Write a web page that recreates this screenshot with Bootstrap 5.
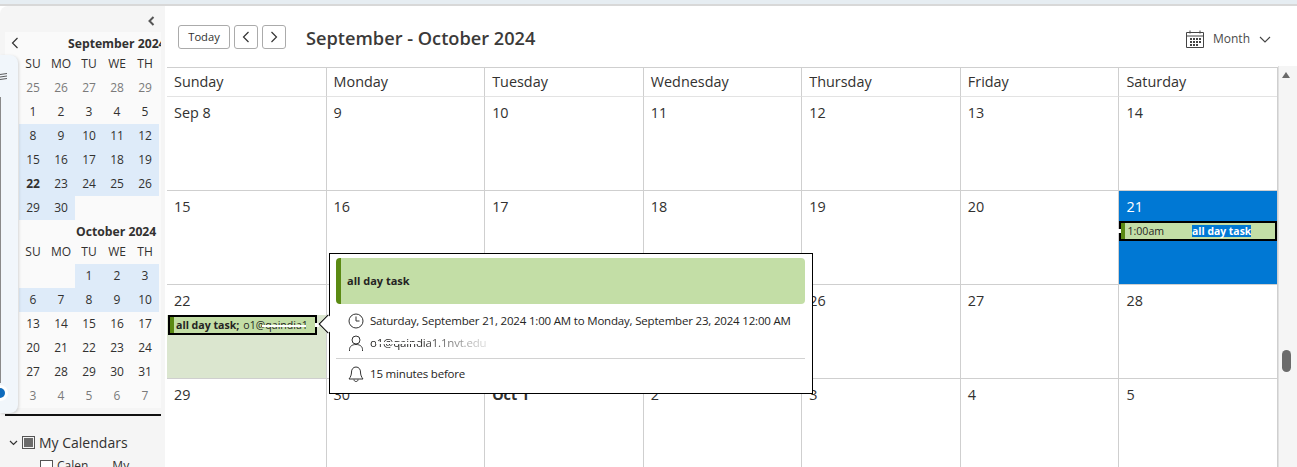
<!DOCTYPE html>
<html lang="en">
<head>
  <meta charset="UTF-8" />
  <title>Calendar</title>
  <link href="https://cdn.jsdelivr.net/npm/bootstrap@5.3.3/dist/css/bootstrap.min.css" rel="stylesheet"/>
  <style>
    html, body { height: 100%; overflow: hidden; }
    body { background: #fff; color: #323130; font-family: "Open Sans", "Noto Sans", sans-serif; font-size: 14px; }

    .top-strip { height: 6px; background: #e6edf2; border-bottom: 2px solid #d8d8d8; }
    .app-wrap { height: 461px; position: relative; }

    .side-pane { width: 165px; flex: none; background: #f5f5f5; border-top-left-radius: 8px; padding: 10px 4px 0 5px; overflow: hidden; }
    .collapse-btn { height: 16px; padding-right: 6px; }
    .mini-cal { background: #fafafa; width: 156px; height: 376px; overflow: hidden; position: relative; padding-left: 14px; }
    .mini-prev { position: absolute; left: 6px; top: 5px; }
    .mini-title { height: 22px; line-height: 24px; font-weight: 700; font-size: 12.2px; white-space: nowrap; color: #323130; }
    .mini-title-sep { padding-left: 49px; }
    .mini-title-oct { padding-left: 57px; }
    .mini-grid { display: grid; grid-template-columns: repeat(5, 28px); grid-template-rows: 22px; grid-auto-rows: 24px; width: 140px; }
    .mini-grid > div { text-align: center; line-height: 24px; font-size: 12px; color: #323130; }
    .mini-grid > .wk { font-size: 12px; height: 20px; line-height: 20px; }
    .mini-grid > .off { color: #7a7a7a; }
    .mini-grid > .sel { background: #deebf9; }
    .mini-grid > .bold { font-weight: 700; }
    .mini-rule { width: 156px; border-top: 2px solid #111; margin-top: 6px; }
    .cal-tree { padding: 16px 0 0 4px; font-size: 14px; white-space: nowrap; }
    .tree-check { width: 13px; height: 13px; border: 1px solid #555; display: inline-flex; align-items: center; justify-content: center; }
    .tree-check i { display: block; width: 9px; height: 9px; background: #6b6b6b; }
    .tree-row-2 { padding-left: 31px; font-size: 12px; margin-top: 4px; }
    .tree-row-2 .tree-check { background: #fff; }
    .tree-my { margin-left: 20px; }

    .left-flyout { position: absolute; left: 0; top: 49px; width: 18px; height: 358px; background: #f1f6fb; border-radius: 0 8px 8px 0; box-shadow: 1px 1px 3px rgba(0,0,0,.15); overflow: hidden; }
    .flyout-line { position: absolute; left: 0; top: 42px; bottom: 30px; width: 1px; background: #8a8a8a; }
    .flyout-icon { position: absolute; left: 0; top: 17px; }
    .flyout-dot { position: absolute; left: -8px; top: 330px; width: 16px; height: 16px; background: #fff; border-radius: 50%; padding: 3px; }
    .flyout-dot i { display: block; width: 10px; height: 10px; border-radius: 50%; background: #0f6cbd; }

    .main-pane { flex: 1; min-width: 0; position: relative; }
    .cal-toolbar { height: 61px; padding: 0 0 0 13px; }
    .btn-tool { height: 24px; padding: 0; border: 1px solid #ababab; border-radius: 3px; background: #fff; font-size: 11.2px; color: #323130; display: flex; align-items: center; justify-content: center; }
    .btn-today { width: 52px; padding-top: 1px; }
    .btn-arrow { width: 24px; }
    .range-title { font-size: 18.2px; font-weight: 600; color: #3b3a39; margin-left: 16px; padding-top: 4px; line-height: 1; white-space: nowrap; }
    .view-pick { position: absolute; left: 1021px; top: 24px; font-size: 12px; color: #4a4a4a; gap: 9px; }

    .cal-body { width: 1111px; margin-left: 2px; border-top: 1px solid #cfcfcf; }
    .cal-head, .cal-week { display: grid; grid-template-columns: repeat(7, 1fr); border-right: 1px solid #cfcfcf; }
    .cal-head > div { height: 29px; line-height: 28px; padding-left: 7px; font-size: 14.4px; border-left: 1px solid #cfcfcf; border-bottom: 1px solid #e3e3e3; }
    .cal-head > div:first-child, .cal-week > div:first-child { border-left: 0; }
    .cal-week { height: 94px; border-bottom: 1px solid #cfcfcf; }
    .cal-week > div { position: relative; padding: 6px 0 0 7px; border-left: 1px solid #cfcfcf; font-size: 14.4px; line-height: 20px; }
    .cal-week > .today-cell { background: #0078d4; color: #fff; }
    .cal-week > .span-cell::before { content: ""; position: absolute; left: 0; right: 0; top: 30px; bottom: 0; background: #dbe6cf; }
    .day-num { position: relative; }
    .cal-week > .strong-day { font-weight: 700; }
    .cal-week.short-row { border-bottom: 0; }

    .evt-bar { position: absolute; height: 20px; background: #c3dea6; border: 2px solid #000; display: flex; align-items: center; font-size: 10.6px; line-height: 1; white-space: nowrap; color: #252423; }
    .evt-bar::before { content: ""; width: 4px; align-self: stretch; background: #5b8a13; flex: none; }
    .evt-left { left: 1px; top: 30px; width: 149px; }
    .evt-right { left: 0; top: 30px; width: 158px; }
    .evt-title { font-weight: 700; padding-left: 2px; }
    .evt-time { padding-left: 2px; }
    .evt-selected { background: #0078d4; color: #fff; font-weight: 700; font-size: 10.4px; margin-left: 28px; padding: 1px 0; }
    .evt-handle { position: absolute; width: 4px; height: 4px; background: #fff; }
    .smudge { position: absolute; height: 2px; background: #fff; }

    .scroll-rail { position: absolute; right: 0; top: 60px; bottom: 0; width: 19px; background: #f5f5f5; border-left: 1px solid #e0e0e0; }
    .scroll-up { position: absolute; left: 3px; top: 6px; width: 0; height: 0; border-left: 4.5px solid transparent; border-right: 4.5px solid transparent; border-bottom: 6px solid #6a6a6a; }
    .scroll-thumb { position: absolute; left: 3px; top: 284px; width: 9px; height: 22px; border-radius: 5px; background: #6b6b6b; }

    .event-pop { position: absolute; left: 329px; top: 247px; width: 484px; height: 141px; background: #fff; border: 1px solid #000; padding: 4px 7px 0 6px; font-size: 11.5px; letter-spacing: -.185px; color: #252423; z-index: 5; }
    .pop-arrow { position: absolute; left: -9px; top: 63px; width: 14px; height: 14px; background: #fff; border-left: 1px solid #000; border-bottom: 1px solid #000; transform: rotate(45deg) scale(.95); }
    .pop-head { height: 46px; background: #c3dea6; border-left: 5px solid #5b8a13; border-radius: 4px; display: flex; align-items: center; padding-left: 6px; font-weight: 700; font-size: 11px; letter-spacing: 0; }
    .pop-row { display: flex; align-items: center; gap: 6px; height: 22px; white-space: nowrap; position: relative; padding-left: 6px; }
    .pop-row svg { flex: none; margin-left: 6px; margin-right: 0; }
    .pop-row-date { margin-top: 6px; }
    .pop-row-remind { margin-top: 4px; }
    .pop-rule { border-top: 1px solid #d2d2d2; margin-top: 4px; }
    .pop-mail { -webkit-mask-image: linear-gradient(90deg, #000 40%, rgba(0,0,0,.15) 100%); mask-image: linear-gradient(90deg, #000 40%, rgba(0,0,0,.15) 100%); }
  </style>
</head>
<body>
  <div class="top-strip"></div>
  <div class="app-wrap d-flex">
    <div class="side-pane">
      <div class="collapse-btn d-flex justify-content-end align-items-start">
        <svg width="7" height="10" viewBox="0 0 7 10"><path d="M5.500 1 1.500 5l4 4" fill="none" stroke="#555" stroke-width="2"/></svg>
      </div>
      <div class="mini-cal">
        <svg class="mini-prev" width="8" height="12" viewBox="0 0 8 12"><path d="M6.500 1 1.500 6l5 5" fill="none" stroke="#333" stroke-width="1.200"/></svg>
        <div class="mini-title mini-title-sep">September 2024</div>
        <div class="mini-grid">
          <div class="wk">SU</div><div class="wk">MO</div><div class="wk">TU</div><div class="wk">WE</div><div class="wk">TH</div>
          <div class="off">25</div><div class="off">26</div><div class="off">27</div><div class="off">28</div><div class="off">29</div>
          <div>1</div><div>2</div><div>3</div><div>4</div><div>5</div>
          <div class="sel">8</div><div class="sel">9</div><div class="sel">10</div><div class="sel">11</div><div class="sel">12</div>
          <div class="sel">15</div><div class="sel">16</div><div class="sel">17</div><div class="sel">18</div><div class="sel">19</div>
          <div class="sel bold">22</div><div class="sel">23</div><div class="sel">24</div><div class="sel">25</div><div class="sel">26</div>
          <div class="sel">29</div><div class="sel">30</div><div></div><div></div><div></div>
        </div>
        <div class="mini-title mini-title-oct">October 2024</div>
        <div class="mini-grid">
          <div class="wk">SU</div><div class="wk">MO</div><div class="wk">TU</div><div class="wk">WE</div><div class="wk">TH</div>
          <div></div><div></div><div class="sel">1</div><div class="sel">2</div><div class="sel">3</div>
          <div class="sel">6</div><div class="sel">7</div><div class="sel">8</div><div class="sel">9</div><div class="sel">10</div>
          <div>13</div><div>14</div><div>15</div><div>16</div><div>17</div>
          <div>20</div><div>21</div><div>22</div><div>23</div><div>24</div>
          <div>27</div><div>28</div><div>29</div><div>30</div><div>31</div>
          <div class="off">3</div><div class="off">4</div><div class="off">5</div><div class="off">6</div><div class="off">7</div>
        </div>
      </div>
      <div class="mini-rule"></div>
      <div class="cal-tree">
        <div class="d-flex align-items-center gap-1">
          <svg width="9" height="6" viewBox="0 0 9 6"><path d="M1 1l3.500 3.500L8 1" fill="none" stroke="#333" stroke-width="1.200"/></svg>
          <span class="tree-check"><i></i></span>
          <span>My Calendars</span>
        </div>
        <div class="tree-row-2 d-flex align-items-center gap-1">
          <span class="tree-check"></span><span>Calen</span><span class="tree-my">My</span>
        </div>
      </div>
    </div>

    <div class="left-flyout">
      <div class="flyout-line"></div>
      <svg class="flyout-icon" width="8" height="10" viewBox="0 0 8 10"><path d="M0 2.500l7-1M0 5l7-1M0 7.500l7-1" stroke="#333" stroke-width=".8" fill="none"/></svg>
      <div class="flyout-dot"><i></i></div>
    </div>

    <div class="main-pane">
      <div class="cal-toolbar d-flex align-items-center gap-1">
        <button class="btn-tool btn-today">Today</button>
        <button class="btn-tool btn-arrow"><svg width="8" height="12" viewBox="0 0 8 12"><path d="M6.500 1 1.500 6l5 5" fill="none" stroke="#333" stroke-width="1.200"/></svg></button>
        <button class="btn-tool btn-arrow"><svg width="8" height="12" viewBox="0 0 8 12"><path d="M1.500 1l5 5-5 5" fill="none" stroke="#333" stroke-width="1.200"/></svg></button>
        <div class="range-title">September - October 2024</div>
      </div>
      <div class="view-pick d-flex align-items-center">
        <svg width="18" height="18" viewBox="0 0 18 18">
          <path d="M.5 2.500h17v15H.5zM.5 6h17M4 .5v3M14 .5v3" fill="none" stroke="#444"/>
          <path d="M4 8h2v2H4zM7 8h2v2H7zM10 8h2v2h-2zM13 8h2v2h-2zM4 11h2v2H4zM7 11h2v2H7zM10 11h2v2h-2zM13 11h2v2h-2zM4 14h2v2H4zM7 14h2v2H7zM10 14h2v2h-2z" fill="#444"/>
        </svg>
        <span>Month</span>
        <svg width="12" height="7" viewBox="0 0 12 7"><path d="M1 1l5 5 5-5" fill="none" stroke="#444" stroke-width="1.100"/></svg>
      </div>

      <div class="cal-body">
        <div class="cal-head">
          <div>Sunday</div><div>Monday</div><div>Tuesday</div><div>Wednesday</div><div>Thursday</div><div>Friday</div><div>Saturday</div>
        </div>
        <div class="cal-week">
          <div>Sep 8</div><div>9</div><div>10</div><div>11</div><div>12</div><div>13</div><div>14</div>
        </div>
        <div class="cal-week">
          <div>15</div><div>16</div><div>17</div><div>18</div><div>19</div><div>20</div>
          <div class="today-cell">21
            <div class="evt-bar evt-right">
              <span class="evt-time">1:00am</span><span class="evt-selected">all day task</span>
              <span class="evt-handle" style="left:-4px;top:6px"></span>
            </div>
          </div>
        </div>
        <div class="cal-week">
          <div class="span-cell"><span class="day-num">22</span>
            <div class="evt-bar evt-left">
              <span class="evt-title">all day task;</span><span class="ms-1">o1@qaindia1</span>
              <span class="smudge" style="left:92px;top:8px;width:44px"></span>
              <span class="evt-handle" style="right:-4px;top:6px"></span>
            </div>
          </div>
          <div>23</div><div>24</div><div>25</div><div>26</div><div>27</div><div>28</div>
        </div>
        <div class="cal-week short-row">
          <div>29</div><div>30</div><div class="strong-day">Oct 1</div><div>2</div><div>3</div><div>4</div><div>5</div>
        </div>
      </div>

      <div class="scroll-rail">
        <div class="scroll-up"></div>
        <div class="scroll-thumb"></div>
      </div>
    </div>

    <div class="event-pop">
      <div class="pop-arrow"></div>
      <div class="pop-head">all day task</div>
      <div class="pop-row pop-row-date">
        <svg width="16" height="16" viewBox="0 0 16 16"><circle cx="8" cy="8" r="7" fill="none" stroke="#333"/><path d="M8 3.500V8h3.500" fill="none" stroke="#333"/></svg>
        <span>Saturday, September 21, 2024 1:00 AM to Monday, September 23, 2024 12:00 AM</span>
      </div>
      <div class="pop-row">
        <svg width="16" height="16" viewBox="0 0 16 16"><circle cx="8" cy="5" r="4" fill="none" stroke="#333"/><path d="M1.500 16v-1.500C1.500 11.500 4 9.500 8 9.500s6.500 2 6.500 5V16" fill="none" stroke="#333"/></svg>
        <span class="pop-mail">o1@qaindia1.1nvt.edu</span>
        <span class="smudge" style="left:40px;top:10px;width:44px"></span>
      </div>
      <div class="pop-rule"></div>
      <div class="pop-row pop-row-remind">
        <svg width="16" height="16" viewBox="0 0 16 16"><path d="M8 1C5 1 3.500 3.500 3.500 6c0 3-1 5-2.500 7h14c-1.500-2-2.500-4-2.500-7C12.500 3.500 11 1 8 1zM6 13.500c0 1.500 1 2 2 2s2-.5 2-2" fill="none" stroke="#333"/></svg>
        <span>15 minutes before</span>
      </div>
    </div>
  </div>
</body>
</html>
